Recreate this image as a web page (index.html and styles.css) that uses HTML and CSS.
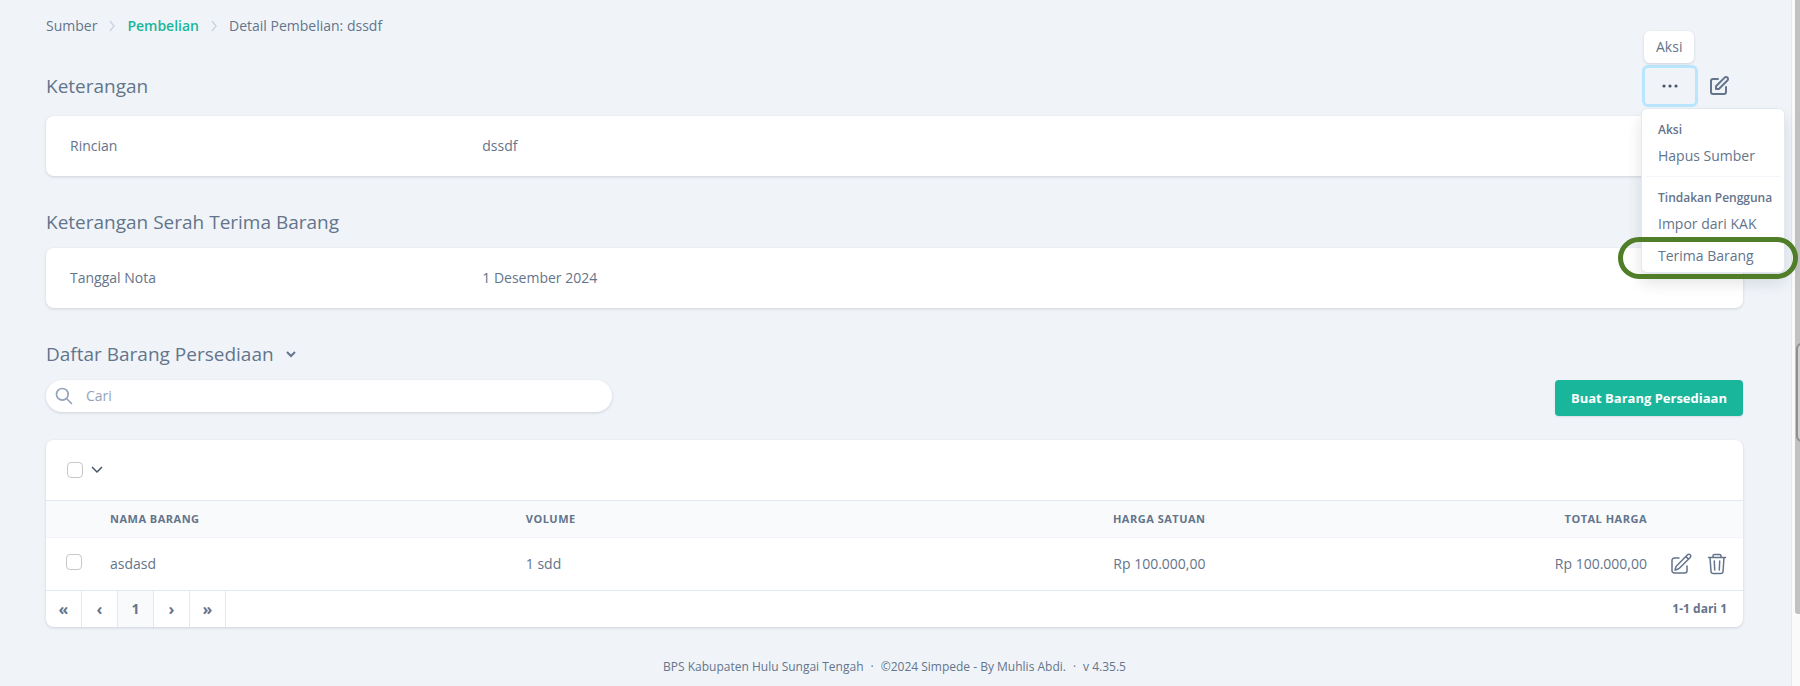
FILE: index.html
```
<!DOCTYPE html>
<html lang="id">
<head>
    <meta charset="UTF-8">
    <meta name="viewport" content="width=device-width, initial-scale=1.0">
    <title>Detail Pembelian: dssdf</title>
    <link rel="stylesheet" href="styles.css">
</head>
<body>
    <div class="page">
        <div class="content">
            <nav class="breadcrumb" aria-label="Breadcrumb">
                <span>Sumber</span>
                <svg class="separator" viewBox="0 0 6 10"><path d="M1 0l4 5-4 5"/></svg>
                <a href="#">Pembelian</a>
                <svg class="separator" viewBox="0 0 6 10"><path d="M1 0l4 5-4 5"/></svg>
                <span>Detail Pembelian: dssdf</span>
            </nav>

            <main>
                <section class="section">
                    <div class="section-header">
                        <h1>Keterangan</h1>
                        <div class="actions">
                            <div class="dropdown">
                                <div class="tooltip" role="tooltip">Aksi</div>
                                <button class="dots-btn" type="button" aria-label="Aksi">
                                    <svg width="24" height="24" viewBox="0 0 24 24" fill="currentColor"><circle cx="6" cy="12" r="1.6"/><circle cx="12" cy="12" r="1.6"/><circle cx="18" cy="12" r="1.6"/></svg>
                                </button>
                                <div class="menu">
                                    <div class="menu-group">
                                        <h3>Aksi</h3>
                                        <button type="button">Hapus Sumber</button>
                                    </div>
                                    <div class="menu-group">
                                        <h3>Tindakan Pengguna</h3>
                                        <button type="button">Impor dari KAK</button>
                                        <button class="highlighted" type="button">Terima Barang</button>
                                    </div>
                                </div>
                            </div>
                            <a class="edit-link" href="#" aria-label="Ubah">
                                <svg class="icon icon-bold" viewBox="0 0 24 24"><path d="M11 5H6a2 2 0 00-2 2v11a2 2 0 002 2h11a2 2 0 002-2v-5m-1.414-9.414a2 2 0 112.828 2.828L11.828 15H9v-2.828l8.586-8.586z"/></svg>
                            </a>
                        </div>
                    </div>
                    <div class="card detail-row">
                        <span>Rincian</span>
                        <span>dssdf</span>
                    </div>
                </section>

                <section class="section">
                    <h2>Keterangan Serah Terima Barang</h2>
                    <div class="card detail-row">
                        <span>Tanggal Nota</span>
                        <span>1 Desember 2024</span>
                    </div>
                </section>

                <section class="section">
                    <h2 class="collapsible">
                        Daftar Barang Persediaan
                        <button type="button" aria-label="Ciutkan">
                            <svg class="chevron chevron-bold" viewBox="0 0 10 6"><path d="M1 1l4 4 4-4"/></svg>
                        </button>
                    </h2>
                    <div class="toolbar">
                        <div class="search">
                            <svg class="icon icon-bold" viewBox="0 0 24 24"><path d="M21 21l-6-6m2-5a7 7 0 11-14 0 7 7 0 0114 0z"/></svg>
                            <input type="search" placeholder="Cari" aria-label="Cari">
                        </div>
                        <button class="create-btn" type="button">Buat Barang Persediaan</button>
                    </div>

                    <div class="card">
                        <div class="select-bar">
                            <input type="checkbox" aria-label="Pilih semua">
                            <svg class="chevron" viewBox="0 0 10 6"><path d="M0 0l5 5 5-5"/></svg>
                        </div>
                        <table>
                            <thead>
                                <tr>
                                    <th class="col-check"></th>
                                    <th class="col-name">Nama Barang</th>
                                    <th class="col-volume">Volume</th>
                                    <th class="col-price number">Harga Satuan</th>
                                    <th class="number">Total Harga</th>
                                    <th class="col-actions"></th>
                                </tr>
                            </thead>
                            <tbody>
                                <tr>
                                    <td><input type="checkbox" aria-label="Pilih asdasd"></td>
                                    <td>asdasd</td>
                                    <td>1 sdd</td>
                                    <td class="number">Rp 100.000,00</td>
                                    <td class="number">Rp 100.000,00</td>
                                    <td>
                                        <div class="row-actions">
                                            <a href="#" aria-label="Ubah">
                                                <svg class="icon" viewBox="0 0 24 24"><path d="M16.862 4.487l1.687-1.688a1.875 1.875 0 112.652 2.652L10.582 16.07a4.5 4.5 0 01-1.897 1.13L6 18l.8-2.685a4.5 4.5 0 011.13-1.897l8.932-8.931zm0 0L19.5 7.125M18 14v4.75A2.25 2.25 0 0115.75 21H5.25A2.25 2.25 0 013 18.75V8.25A2.25 2.25 0 015.25 6H10"/></svg>
                                            </a>
                                            <button type="button" aria-label="Hapus">
                                                <svg class="icon" viewBox="0 0 24 24"><path d="M3.500 5.500h17M5 5.500l1 14a2.250 2.250 0 002.200 2h7.600a2.250 2.250 0 002.200-2l1-14M8 5.500V4a1.500 1.500 0 011.500-1.500h5A1.500 1.500 0 0116 4v1.500M9.300 9l.4 9M14.700 9l-.4 9"/></svg>
                                            </button>
                                        </div>
                                    </td>
                                </tr>
                            </tbody>
                        </table>
                        <div class="pagination">
                            <button type="button">«</button>
                            <button type="button">‹</button>
                            <button class="current" type="button">1</button>
                            <button type="button">›</button>
                            <button type="button">»</button>
                            <span class="count">1-1 dari 1</span>
                        </div>
                    </div>
                </section>
            </main>

            <footer class="footer">
                <span>BPS Kabupaten Hulu Sungai Tengah</span>
                <span>·</span>
                <span>©2024 Simpede - By Muhlis Abdi.</span>
                <span>·</span>
                <span>v 4.35.5</span>
            </footer>
        </div>
        <div class="scroll-track">
            <div class="scroll-thumb"></div>
            <div class="side-handle"></div>
        </div>
    </div>
</body>
</html>
```
FILE: styles.css
```
* {
    box-sizing: border-box;
}

body {
    margin: 0;
    font-family: 'Open Sans', 'Noto Sans', sans-serif;
    font-size: 14px;
    line-height: 20px;
    color: #64748b;
    background: #f0f4f9;
}

button,
input {
    font: inherit;
    color: inherit;
}

button {
    padding: 0;
    border: none;
    background: none;
    cursor: pointer;
}

a {
    color: inherit;
    text-decoration: none;
}

h1,
h2 {
    margin: 0;
    font-size: 19px;
    font-weight: 400;
    line-height: 28px;
}

.page {
    display: flex;
    min-height: 100vh;
    overflow: hidden;
}

.content {
    flex: 1;
    padding: 16px 48px 0 46px;
}

.icon {
    display: block;
    width: 24px;
    height: 24px;
    fill: none;
    stroke: currentColor;
    stroke-width: 1.5;
    stroke-linecap: round;
    stroke-linejoin: round;
}

.icon-bold {
    stroke-width: 2;
}

.chevron {
    display: block;
    width: 10px;
    height: 6px;
    fill: none;
    stroke: #475569;
    stroke-width: 1.5;
    overflow: visible;
}

.chevron-bold {
    stroke: #64748b;
    stroke-width: 2;
}

/* Breadcrumb */
.breadcrumb {
    display: flex;
    align-items: center;
    gap: 12px;
    margin-bottom: 32px;
    font-weight: 500;
}

.breadcrumb a {
    color: #1ab69c;
    font-weight: 600;
}

.separator {
    width: 6px;
    height: 10px;
    fill: none;
    stroke: #cbd5e1;
    stroke-width: 1.5;
    overflow: visible;
}

/* Sections */
.section {
    margin-bottom: 32px;
}

.section h2 {
    margin-bottom: 12px;
}

.section-header {
    display: flex;
    align-items: center;
    justify-content: space-between;
    margin-bottom: 12px;
}

.card {
    border-radius: 8px;
    background: #fff;
    box-shadow: 0 1px 3px rgba(15, 23, 42, 0.15);
}

.detail-row {
    display: grid;
    grid-template-columns: 25% 1fr;
    padding: 20px 24px;
}

/* Header actions */
.actions {
    display: flex;
    align-items: center;
    gap: 12px;
    padding-right: 12px;
}

.dropdown {
    position: relative;
}

.dots-btn {
    display: flex;
    align-items: center;
    justify-content: center;
    width: 50px;
    height: 36px;
    border-radius: 3px;
    color: #475569;
    box-shadow: 0 0 0 3px #bae6fd;
}

.tooltip {
    position: absolute;
    bottom: calc(100% + 5px);
    left: -1px;
    padding: 6px 12px;
    border-radius: 6px;
    background: #fff;
    box-shadow: 0 1px 3px rgba(15, 23, 42, 0.15);
}

.menu {
    position: absolute;
    z-index: 1;
    top: calc(100% + 4px);
    left: -4px;
    width: 144px;
    border: 1px solid #e2e8f0;
    border-radius: 6px;
    background: #fff;
    box-shadow: 0 10px 15px rgba(15, 23, 42, 0.12);
    white-space: nowrap;
}

.menu-group {
    margin: 0 4px;
    padding-top: 11px;
}

.menu-group + .menu-group {
    margin-top: 4px;
    border-top: 1px solid #f1f5f9;
}

.menu h3 {
    margin: 0;
    padding: 0 12px;
    font-size: 12px;
    font-weight: 600;
    line-height: 20px;
}

.menu button {
    display: block;
    width: 100%;
    padding: 6px 12px;
    text-align: left;
}

.menu .highlighted {
    position: relative;
}

.highlighted::after {
    content: "";
    position: absolute;
    inset: -3px -18px -7px -28px;
    border: 5px solid #4f7d28;
    border-radius: 21px;
}

/* Search and create */
.collapsible {
    display: flex;
    align-items: center;
    gap: 12px;
}

.toolbar {
    display: flex;
    align-items: flex-start;
    justify-content: space-between;
    margin-bottom: 24px;
}

.search {
    display: flex;
    align-items: center;
    gap: 12px;
    width: 33.33%;
    height: 32px;
    padding: 0 8px;
    border-radius: 16px;
    background: #fff;
    color: #94a3b8;
    box-shadow: 0 1px 3px rgba(15, 23, 42, 0.15);
}

.search .icon {
    width: 20px;
    height: 20px;
}

.search input {
    flex: 1;
    padding: 0;
    border: none;
    outline: none;
    background: none;
}

.search input::placeholder {
    color: #94a3b8;
}

.create-btn {
    height: 36px;
    padding: 0 16px;
    border-radius: 4px;
    background: #1ab69c;
    color: #fff;
    font-size: 13px;
    font-weight: 700;
    box-shadow: 0 1px 2px rgba(15, 23, 42, 0.1);
}

/* Table */
.select-bar {
    display: flex;
    align-items: center;
    gap: 9px;
    height: 60px;
    padding-left: 21px;
}

input[type="checkbox"] {
    display: block;
    appearance: none;
    width: 16px;
    height: 16px;
    margin: 0;
    border: 1px solid #c8c8c8;
    border-radius: 4px;
    background: #fff;
}

table {
    width: 100%;
    table-layout: fixed;
    border-collapse: collapse;
}

th,
td {
    padding: 8px;
    text-align: left;
}

th {
    height: 37px;
    border-top: 1px solid #e2e8f0;
    border-bottom: 1px solid #f1f5f9;
    background: #f8fafc;
    font-size: 11px;
    letter-spacing: 0.5px;
    text-transform: uppercase;
}

td {
    height: 52px;
}

td:first-child {
    padding-bottom: 12px;
    padding-left: 20px;
}

.number {
    text-align: right;
}

.col-check {
    width: 56px;
}

.col-name {
    width: 24.5%;
}

.col-volume {
    width: 20%;
}

.col-price {
    width: 21%;
}

.col-actions {
    width: 88px;
}

.row-actions {
    display: flex;
    gap: 12px;
    padding-left: 6px;
}

/* Pagination */
.pagination {
    display: flex;
    align-items: center;
    border-top: 1px solid #e2e8f0;
    font-weight: 700;
}

.pagination button {
    width: 36px;
    height: 36px;
    border-right: 1px solid #e2e8f0;
    font-size: 16px;
}

.pagination .current {
    background: #f8fafc;
    font-size: 14px;
}

.count {
    margin-left: auto;
    padding-right: 16px;
    font-size: 12px;
}

.footer {
    display: flex;
    justify-content: center;
    gap: 7px;
    font-size: 12px;
    line-height: 16px;
}

/* Scrollbar at the window edge */
.scroll-track {
    position: relative;
    width: 9px;
    padding-left: 3px;
    border-left: 1px solid #e5e7eb;
    background: #fafafa;
}

.scroll-thumb {
    height: 89.5%;
    border-radius: 0 0 0 3px;
    background: #c1c1c1;
}

.side-handle {
    position: absolute;
    top: 50%;
    left: 4px;
    width: 12px;
    height: 99px;
    border: 2px solid #8f8f8f;
    border-radius: 6px;
    background: #d0d0d0;
}
```
